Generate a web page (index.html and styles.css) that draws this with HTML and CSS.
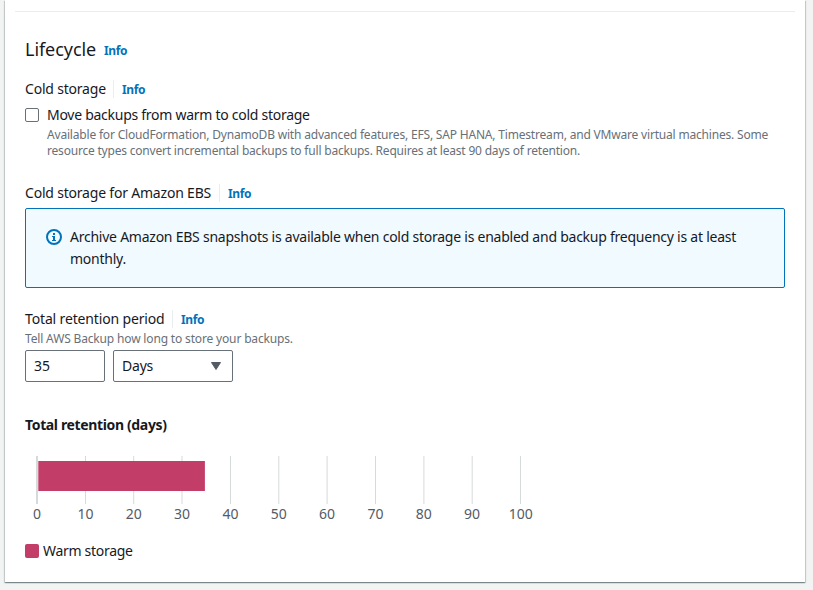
FILE: index.html
```html
<!DOCTYPE html>
<html lang="en">
<head>
    <meta charset="UTF-8">
    <meta name="viewport" content="width=device-width, initial-scale=1.0">
    <title>Backup rule</title>
    <link rel="stylesheet" href="styles.css">
</head>
<body>
    <div class="container">
        <hr class="divider">
        <div class="content">
            <div class="heading">
                <h2>Lifecycle</h2>
                <a class="info" href="#">Info</a>
            </div>

            <div class="label-row">
                <span class="label cold">Cold storage</span>
                <a class="info" href="#">Info</a>
            </div>
            <label class="check">
                <input type="checkbox">
                <span class="check-label">Move backups from warm to cold storage</span>
            </label>
            <p class="description check-description"><span class="line-one">Available for CloudFormation, DynamoDB with advanced features, EFS, SAP HANA, Timestream, and VMware virtual machines. Some</span><br><span class="line-two">resource types convert incremental backups to full backups. Requires at least 90 days of retention.</span></p>

            <div class="label-row ebs-row">
                <span class="label ebs">Cold storage for Amazon EBS</span>
                <a class="info" href="#">Info</a>
            </div>
            <div class="alert">
                <svg class="alert-icon" width="16" height="16" viewBox="0 0 16 16">
                    <circle cx="8" cy="8" r="7" fill="none" stroke="#0073bb" stroke-width="2"/>
                    <path d="M7 4h2v2H7zM6 7h3v4h1v1H6v-1h1V8H6z" fill="#0073bb"/>
                </svg>
                <p class="alert-text">Archive Amazon EBS snapshots is available when cold storage is enabled and backup frequency is at least<br>monthly.</p>
            </div>

            <div class="label-row period-row">
                <span class="label period">Total retention period</span>
                <a class="info" href="#">Info</a>
            </div>
            <p class="description period-description">Tell AWS Backup how long to store your backups.</p>
            <div class="fields">
                <input class="number" type="text" value="35">
                <button class="select">
                    <span>Days</span>
                    <svg width="10" height="8" viewBox="0 0 10 8">
                        <path d="M0.5 0.5h9L5 7.5z" fill="#545b64" stroke="#545b64" stroke-linejoin="round"/>
                    </svg>
                </button>
            </div>

            <h3>Total retention (days)</h3>
            <svg class="chart" width="530" height="72" viewBox="0 0 530 72">
                <g class="grid">
                    <path class="axis" d="M12 0v48"/>
                    <path d="M60.5 0v48M108.7 0v48M157 0v48M205.5 0v48M253.8 0v48M302.1 0v48M350.5 0v48M398.9 0v48M447.2 0v48M495.5 0v48"/>
                </g>
                <rect class="bar" x="13.3" y="5" width="166.6" height="30"/>
                <g class="ticks">
                    <text x="12" y="63">0</text>
                    <text x="60.5" y="63">10</text>
                    <text x="108.8" y="63">20</text>
                    <text x="157" y="63">30</text>
                    <text x="205.5" y="63">40</text>
                    <text x="253.8" y="63">50</text>
                    <text x="302.1" y="63">60</text>
                    <text x="350.5" y="63">70</text>
                    <text x="398.8" y="63">80</text>
                    <text x="447.1" y="63">90</text>
                    <text x="495.8" y="63">100</text>
                </g>
            </svg>
            <div class="legend">
                <span class="swatch"></span>
                <span class="legend-text">Warm storage</span>
            </div>
        </div>
    </div>
</body>
</html>
```

FILE: styles.css
```css
* {
    box-sizing: border-box;
}
body {
    margin: 0;
    height: 590px;
    overflow: hidden;
    background: #f2f3f3;
    color: #16191f;
    font-family: "Noto Sans", "Open Sans", sans-serif;
    font-size: 14px;
    line-height: 22px;
}
.container {
    width: 800px;
    height: 582px;
    margin-left: 5px;
    padding-top: 11px;
    background: #fff;
    box-shadow: 0 1px 1px 0 rgba(0, 28, 36, 0.3), 1px 1px 1px 0 rgba(0, 28, 36, 0.15), -1px 1px 1px 0 rgba(0, 28, 36, 0.15);
}
.divider {
    height: 1px;
    margin: 0 10px;
    border: none;
    background: #eaeded;
}
.content {
    padding: 26px 20px 0;
}
h2, h3, p {
    margin: 0;
}
.heading {
    display: flex;
    align-items: center;
    gap: 8px;
    height: 22px;
}
h2 {
    width: 71px;
    font-size: 18px;
    font-weight: 400;
    white-space: nowrap;
    letter-spacing: -0.05px;
}
.info {
    color: #0073bb;
    font-size: 12px;
    font-weight: 700;
    text-decoration: none;
    letter-spacing: -0.35px;
}
.heading .info {
    padding-top: 4px;
}
.label-row {
    display: flex;
    align-items: center;
    height: 22px;
    margin-top: 18px;
}
.label {
    white-space: nowrap;
    letter-spacing: -0.2px;
}
.cold {
    width: 80px;
}
.ebs {
    width: 186px;
}
.period {
    width: 139px;
    letter-spacing: -0.15px;
}
.label-row .info {
    height: 18px;
    margin-left: 8px;
    padding-left: 8px;
    border-left: 1px solid #eaeded;
    line-height: 20px;
}
.check {
    display: flex;
    align-items: center;
    gap: 8px;
    height: 22px;
    margin-top: 4px;
}
.check input {
    appearance: none;
    width: 14px;
    height: 14px;
    margin: 0;
    border: 1px solid #687078;
    border-radius: 2px;
    background: #fff;
}
.check-label {
    letter-spacing: -0.27px;
}
.description {
    color: #687078;
    font-size: 12px;
    line-height: 16px;
    white-space: nowrap;
    letter-spacing: -0.16px;
}
.check-description {
    margin: 1px 0 0 22px;
}
.line-one {
    letter-spacing: -0.187px;
}
.line-two {
    letter-spacing: -0.2px;
}
.ebs-row {
    margin-top: 23px;
}
.alert {
    display: flex;
    gap: 8px;
    height: 80px;
    margin-top: 4px;
    padding: 17px 20px;
    border: 1px solid #0073bb;
    border-radius: 2px;
    background: #f1faff;
}
.alert-icon {
    flex: none;
    margin-top: 3px;
}
.alert-text {
    white-space: nowrap;
    letter-spacing: -0.242px;
}
.period-row {
    margin-top: 20px;
}
.period-description {
    margin-top: 1px;
}
.fields {
    display: flex;
    gap: 8px;
    margin-top: 3px;
}
.number, .select {
    height: 32px;
    padding: 0 8px;
    border: 1px solid #687078;
    border-radius: 2px;
    background: #fff;
    color: #16191f;
    font: inherit;
}
.number {
    width: 80px;
    padding-bottom: 1px;
}
.select {
    display: flex;
    align-items: center;
    justify-content: space-between;
    width: 120px;
    padding-right: 11px;
    letter-spacing: -0.2px;
}
h3 {
    margin-top: 32px;
    font-size: 14px;
    font-weight: 700;
    letter-spacing: -0.36px;
}
.chart {
    display: block;
    margin-top: 20px;
}
.grid path {
    stroke: #d5dbdb;
}
.grid .axis {
    stroke-width: 2;
}
.bar {
    fill: #c33d69;
}
.ticks text {
    fill: #545b64;
    font-size: 14px;
    text-anchor: middle;
}
.legend {
    display: flex;
    align-items: center;
    gap: 4px;
    margin-top: 12px;
}
.swatch {
    width: 14px;
    height: 14px;
    border-radius: 2px;
    background: #c33d69;
}
.legend-text {
    letter-spacing: -0.3px;
}
```
